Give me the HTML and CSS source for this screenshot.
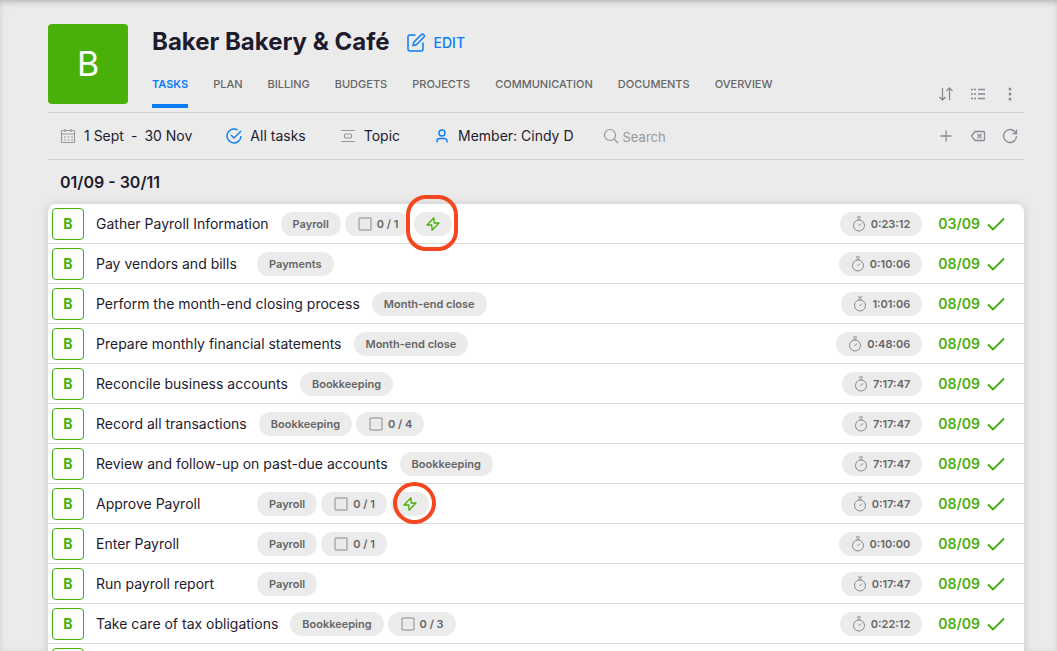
FILE: index.html
```html
<!DOCTYPE html>
<html lang="en">
<head>
    <meta charset="UTF-8">
    <meta name="viewport" content="width=device-width, initial-scale=1.0">
    <title>Baker Bakery &amp; Café</title>
    <link rel="stylesheet" href="styles.css">
</head>
<body>
    <svg class="sprite" aria-hidden="true">
        <symbol id="check" viewBox="0 0 18 14"><path d="M1 7.5l5 5L17 1.5"/></symbol>
        <symbol id="timer" viewBox="0 0 14 16"><path d="M5 1h4M5.500 3h3"/><circle cx="7" cy="9.500" r="5.500"/><path d="M6.500 10l2.500-2.500"/></symbol>
        <symbol id="box" viewBox="0 0 14 14"><rect x="1" y="1" width="12" height="12" rx="1"/></symbol>
        <symbol id="bolt" viewBox="0 0 14 14"><path d="M8 .8L1 8h4.800L6 13.200 13 6H8.200z"/></symbol>
    </svg>

    <main class="page">
        <header class="client">
            <div class="logo">B</div>
            <div class="client-info">
                <div class="client-title">
                    <h1>Baker Bakery &amp; Café</h1>
                    <button type="button" class="edit">
                        <svg width="20" height="20" viewBox="0 0 20 20"><path d="M9.500 2H4A2 2 0 0 0 2 4v12a2 2 0 0 0 2 2h11a2 2 0 0 0 2-2V9.500"/><path d="M7 12.500l.8-3.300L15.500 1.500a1.400 1.400 0 0 1 2 0l.5.500a1.400 1.400 0 0 1 0 2l-7.700 7.700z"/></svg>
                        EDIT
                    </button>
                </div>
                <nav class="tabs">
                    <a href="#" class="active">TASKS</a>
                    <a href="#">PLAN</a>
                    <a href="#">BILLING</a>
                    <a href="#">BUDGETS</a>
                    <a href="#">PROJECTS</a>
                    <a href="#">COMMUNICATION</a>
                    <a href="#">DOCUMENTS</a>
                    <a href="#">OVERVIEW</a>
                </nav>
            </div>
            <div class="actions">
                <button type="button" aria-label="Sort"><svg width="16" height="16" viewBox="0 0 16 16"><path d="M4.500 2v12M1.500 11l3 3 3-3M11.500 14V2M8.500 5l3-3 3 3"/></svg></button>
                <button type="button" aria-label="List view"><svg width="16" height="16" viewBox="0 0 16 16"><path stroke-dasharray="2 1" d="M1 3.500h5M1 8h5M1 12.500h5"/><path d="M8 3.500h7M8 8h7M8 12.500h7"/></svg></button>
                <button type="button" aria-label="More"><svg class="dots" width="16" height="16" viewBox="0 0 16 16"><circle cx="8" cy="3" r="1.500"/><circle cx="8" cy="8" r="1.500"/><circle cx="8" cy="13" r="1.500"/></svg></button>
            </div>
        </header>

        <div class="filters">
            <button type="button" class="filter">
                <svg width="16" height="16" viewBox="0 0 16 16"><rect x="1.500" y="2.500" width="13" height="12" rx="1"/><path d="M1.500 6h13M5 1v3M11 1v3"/><path stroke-dasharray="2 1.500" d="M4 9h9M4 12h9"/></svg>
                <span class="range"><span>1 Sept</span><span>-</span><span>30 Nov</span></span>
            </button>
            <button type="button" class="filter blue">
                <svg width="16" height="16" viewBox="0 0 16 16"><path d="M11.500 1.900A7 7 0 1 0 15 8"/><path d="M5 7l3 3 7-7"/></svg>
                All tasks
            </button>
            <button type="button" class="filter">
                <svg width="16" height="16" viewBox="0 0 16 16"><path d="M1 2.500h14M1 13.500h14"/><rect x="4.500" y="6" width="7" height="4" rx="1"/></svg>
                Topic
            </button>
            <button type="button" class="filter blue">
                <svg width="16" height="16" viewBox="0 0 16 16"><circle cx="8" cy="5" r="3"/><path d="M3 14.500V13a2.500 2.500 0 0 1 2.500-2.500h5A2.500 2.500 0 0 1 13 13v1.500"/></svg>
                Member: Cindy D
            </button>
            <label class="search">
                <svg width="16" height="16" viewBox="0 0 16 16"><circle cx="7" cy="7" r="5.500"/><path d="M11 11l4 4"/></svg>
                <input type="text" placeholder="Search" aria-label="Search">
            </label>
            <div class="actions">
                <button type="button" aria-label="Add"><svg width="16" height="16" viewBox="0 0 16 16"><path d="M8 2.500v11M2.500 8h11"/></svg></button>
                <button type="button" aria-label="Clear"><svg width="16" height="16" viewBox="0 0 16 16"><path d="M5 3.500h8.500a1 1 0 0 1 1 1v7a1 1 0 0 1-1 1H5L1.500 8zM7.500 6l4 4M11.500 6l-4 4"/></svg></button>
                <button type="button" aria-label="Refresh"><svg width="16" height="16" viewBox="0 0 16 16"><path d="M14.500 8a6.500 6.500 0 1 1-2-4.700l2 2"/><path d="M14.500 1.500v4h-4"/></svg></button>
            </div>
        </div>

        <h2>01/09 - 30/11</h2>

        <ul class="tasks">
            <li>
                <span class="badge">B</span>
                <span class="name">Gather Payroll Information</span>
                <span class="tag">Payroll</span>
                <span class="tag"><svg class="box"><use href="#box"/></svg>0 / 1</span>
                <span class="tag auto ring"><svg class="bolt"><use href="#bolt"/></svg></span>
                <span class="tag time"><svg class="timer"><use href="#timer"/></svg>0:23:12</span>
                <span class="date">03/09</span>
                <svg class="check"><use href="#check"/></svg>
            </li>
            <li>
                <span class="badge">B</span>
                <span class="name">Pay vendors and bills</span>
                <span class="tag">Payments</span>
                <span class="tag time"><svg class="timer"><use href="#timer"/></svg>0:10:06</span>
                <span class="date">08/09</span>
                <svg class="check"><use href="#check"/></svg>
            </li>
            <li>
                <span class="badge">B</span>
                <span class="name">Perform the month-end closing process</span>
                <span class="tag">Month-end close</span>
                <span class="tag time"><svg class="timer"><use href="#timer"/></svg>1:01:06</span>
                <span class="date">08/09</span>
                <svg class="check"><use href="#check"/></svg>
            </li>
            <li>
                <span class="badge">B</span>
                <span class="name">Prepare monthly financial statements</span>
                <span class="tag">Month-end close</span>
                <span class="tag time"><svg class="timer"><use href="#timer"/></svg>0:48:06</span>
                <span class="date">08/09</span>
                <svg class="check"><use href="#check"/></svg>
            </li>
            <li>
                <span class="badge">B</span>
                <span class="name">Reconcile business accounts</span>
                <span class="tag">Bookkeeping</span>
                <span class="tag time"><svg class="timer"><use href="#timer"/></svg>7:17:47</span>
                <span class="date">08/09</span>
                <svg class="check"><use href="#check"/></svg>
            </li>
            <li>
                <span class="badge">B</span>
                <span class="name">Record all transactions</span>
                <span class="tag">Bookkeeping</span>
                <span class="tag"><svg class="box"><use href="#box"/></svg>0 / 4</span>
                <span class="tag time"><svg class="timer"><use href="#timer"/></svg>7:17:47</span>
                <span class="date">08/09</span>
                <svg class="check"><use href="#check"/></svg>
            </li>
            <li>
                <span class="badge">B</span>
                <span class="name">Review and follow-up on past-due accounts</span>
                <span class="tag">Bookkeeping</span>
                <span class="tag time"><svg class="timer"><use href="#timer"/></svg>7:17:47</span>
                <span class="date">08/09</span>
                <svg class="check"><use href="#check"/></svg>
            </li>
            <li>
                <span class="badge">B</span>
                <span class="name">Approve Payroll</span>
                <span class="tag">Payroll</span>
                <span class="tag"><svg class="box"><use href="#box"/></svg>0 / 1</span>
                <span class="tag auto ring round"><svg class="bolt"><use href="#bolt"/></svg></span>
                <span class="tag time"><svg class="timer"><use href="#timer"/></svg>0:17:47</span>
                <span class="date">08/09</span>
                <svg class="check"><use href="#check"/></svg>
            </li>
            <li>
                <span class="badge">B</span>
                <span class="name">Enter Payroll</span>
                <span class="tag">Payroll</span>
                <span class="tag"><svg class="box"><use href="#box"/></svg>0 / 1</span>
                <span class="tag time"><svg class="timer"><use href="#timer"/></svg>0:10:00</span>
                <span class="date">08/09</span>
                <svg class="check"><use href="#check"/></svg>
            </li>
            <li>
                <span class="badge">B</span>
                <span class="name">Run payroll report</span>
                <span class="tag">Payroll</span>
                <span class="tag time"><svg class="timer"><use href="#timer"/></svg>0:17:47</span>
                <span class="date">08/09</span>
                <svg class="check"><use href="#check"/></svg>
            </li>
            <li>
                <span class="badge">B</span>
                <span class="name">Take care of tax obligations</span>
                <span class="tag">Bookkeeping</span>
                <span class="tag"><svg class="box"><use href="#box"/></svg>0 / 3</span>
                <span class="tag time"><svg class="timer"><use href="#timer"/></svg>0:22:12</span>
                <span class="date">08/09</span>
                <svg class="check"><use href="#check"/></svg>
            </li>
            <li>
                <span class="badge"></span>
            </li>
        </ul>
    </main>
</body>
</html>
```
FILE: styles.css
```css
*, *::after {
    box-sizing: border-box;
}
body {
    margin: 0;
    font-family: Inter, "Liberation Sans", sans-serif;
    font-size: 14px;
    line-height: 16px;
    color: #1f1b2e;
    background-color: #ebebeb;
}
.sprite {
    display: none;
}
svg {
    flex: none;
    fill: none;
    stroke: currentColor;
}
button {
    display: flex;
    align-items: center;
    padding: 0;
    border: none;
    background: none;
    font: inherit;
    color: inherit;
    cursor: pointer;
}
.page {
    height: 100vh;
    overflow: hidden;
    padding: 24px 33px 0 48px;
    box-shadow: inset 0 4px 6px -3px #aaa, inset 0 0 8px #e0e0e0;
}

/* header */
.client {
    display: flex;
    height: 89px;
    border-bottom: 1px solid #d0d0d0;
}
.logo {
    display: flex;
    align-items: center;
    justify-content: center;
    width: 80px;
    height: 80px;
    margin-right: 24px;
    border-radius: 4px;
    background-color: #49b00a;
    color: #fff;
    font-size: 34px;
}
.client-info {
    flex: 1;
}
.client-title {
    display: flex;
    align-items: center;
    height: 36px;
    gap: 16px;
}
h1 {
    margin: 0;
    line-height: 28px;
    font-size: 24px;
    font-weight: 700;
}
.edit {
    gap: 8px;
    padding-top: 2px;
    color: #0a7cf5;
    font-weight: 500;
}
.edit svg {
    stroke-width: 1.5;
}
.tabs {
    display: flex;
    gap: 25px;
    padding-top: 16px;
}
.tabs a {
    height: 32px;
    font-size: 11px;
    font-weight: 500;
    color: #666;
    text-decoration: none;
}
.tabs .active {
    font-weight: 600;
    color: #0a7cf5;
    border-bottom: 4px solid #0a7cf5;
}
.actions {
    display: flex;
    gap: 16px;
    padding-right: 6px;
    color: #868b96;
}
.actions svg {
    stroke-width: 1.3;
}
.client .actions {
    align-items: flex-end;
    padding-bottom: 10px;
}
.actions .dots {
    fill: currentColor;
    stroke: none;
}

/* filter bar */
.filters {
    display: flex;
    align-items: center;
    height: 47px;
    padding-left: 12px;
    border-bottom: 1px solid #d0d0d0;
}
.filter {
    gap: 8px;
    margin-right: 34px;
}
.filter svg {
    color: #999;
    stroke-width: 1.2;
}
.filter.blue svg {
    color: #0a7cf5;
    stroke-width: 1.4;
}
.range {
    display: flex;
    gap: 7px;
}
.search {
    display: flex;
    align-items: center;
    flex: 1;
    gap: 4px;
    margin-left: -5px;
    color: #999;
}
.search svg {
    stroke-width: 1.2;
}
.search input {
    width: 120px;
    padding: 2px 0 0;
    border: none;
    outline: none;
    background: none;
    font: inherit;
    font-size: 13px;
}
.search input::placeholder {
    color: #999;
}
h2 {
    margin: 0;
    padding-left: 12px;
    line-height: 44px;
    font-size: 16px;
    font-weight: 600;
}

/* task list */
.tasks {
    margin: 0;
    padding: 0;
    list-style: none;
    border-radius: 8px 8px 0 0;
    background-color: #fff;
    box-shadow: 0 0 10px rgba(0,0,0,0.15);
}
.tasks li {
    display: flex;
    align-items: center;
    gap: 4px;
    height: 40px;
    padding: 4px 19px 3px 4px;
    border-bottom: 1px solid #dcdcdc;
}
.badge {
    display: flex;
    align-items: center;
    justify-content: center;
    width: 32px;
    height: 32px;
    border: 1px solid #49b00a;
    border-radius: 4px;
    font-weight: 700;
    color: #49b00a;
}
.name {
    min-width: 149px;
    margin: 0 8px;
}
.tag {
    display: flex;
    align-items: center;
    height: 24px;
    padding: 0 12px;
    border-radius: 12px;
    background-color: #ebebeb;
    font-size: 11px;
    font-weight: 600;
    color: #666;
}
.box {
    width: 14px;
    height: 14px;
    margin: 0 5px 0 1px;
    color: #aaa;
    stroke-width: 1.5;
}
.bolt {
    width: 14px;
    height: 14px;
    color: #49b00a;
    stroke-width: 1.3;
    stroke-linejoin: round;
}
.auto {
    position: relative;
}
/* highlight drawn over the automation tag */
.ring::after {
    content: "";
    position: absolute;
    top: -17px;
    left: -8px;
    width: 52px;
    height: 56px;
    border: 4px solid #f4471f;
    border-radius: 20px;
}
.ring.round::after {
    top: -10px;
    left: 2px;
    width: 43px;
    height: 42px;
    border-radius: 50%;
}
.time {
    margin-left: auto;
}
.timer {
    width: 14px;
    height: 16px;
    margin-right: 5px;
    color: #888;
}
.date {
    margin-left: 12px;
    font-weight: 600;
    color: #49b00a;
}
.check {
    width: 18px;
    height: 14px;
    margin-left: 3px;
    color: #3faa14;
    stroke-width: 1.8;
}
```
